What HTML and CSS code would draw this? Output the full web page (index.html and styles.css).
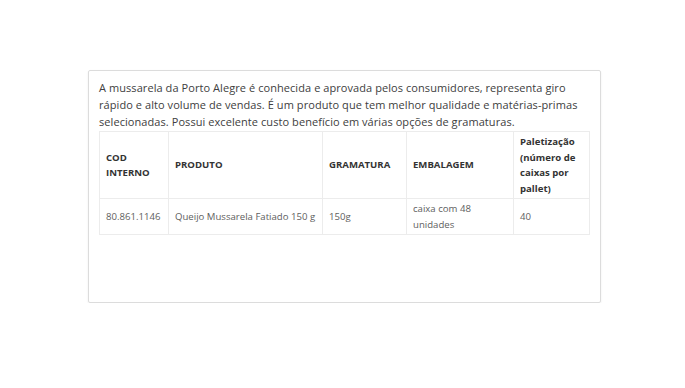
FILE: index.html
```html
<!DOCTYPE html>
<html lang="pt-BR">
<head>
<meta charset="utf-8">
<title>Mussarela Porto Alegre</title>
<link rel="stylesheet" href="styles.css">
</head>
<body>
<div class="page">
  <div class="card">
    <p class="intro">A mussarela da Porto Alegre é conhecida e aprovada pelos consumidores, representa giro rápido e alto volume de vendas. É um produto que tem melhor qualidade e matérias-primas selecionadas. Possui excelente custo benefício em várias opções de gramaturas.</p>
    <table class="spec">
      <colgroup>
        <col class="c1"><col class="c2"><col class="c3"><col class="c4"><col class="c5">
      </colgroup>
      <thead>
        <tr>
          <th class="upper">COD<br>INTERNO</th>
          <th class="upper">PRODUTO</th>
          <th class="upper">GRAMATURA</th>
          <th class="upper">EMBALAGEM</th>
          <th>Paletização (número de caixas por pallet)</th>
        </tr>
      </thead>
      <tbody>
        <tr>
          <td>80.861.1146</td>
          <td>Queijo Mussarela Fatiado 150 g</td>
          <td>150g</td>
          <td>caixa com 48 unidades</td>
          <td>40</td>
        </tr>
      </tbody>
    </table>
  </div>
</div>
</body>
</html>
```
FILE: styles.css
```css
html, body {
  margin: 0;
  padding: 0;
  background: #ffffff;
}
body {
  font-family: "Open Sans", "Liberation Sans", sans-serif;
  color: #333;
}
.page {
  padding: 70px 0 0 88px;
}
.card {
  width: 491px;
  height: 213px;
  padding: 8px 10px 10px 10px;
  border: 1px solid #dcdcdc;
  border-radius: 2px;
  box-shadow: 0 1px 2px rgba(0,0,0,0.08);
}
.intro {
  margin: 0 0 1px 0;
  font-size: 11px;
  line-height: 17px;
  letter-spacing: 0.07px;
  color: #404040;
}
.spec {
  width: 490px;
  border-collapse: collapse;
  table-layout: fixed;
  font-size: 9.6px;
  line-height: 15.5px;
}
.c1 { width: 69px; }
.c2 { width: 154px; }
.c3 { width: 84px; }
.c4 { width: 107px; }
.c5 { width: 76px; }
.spec th, .spec td {
  border: 1px solid #ececec;
  padding: 2px 6px;
  text-align: left;
  vertical-align: middle;
}
.spec th {
  font-weight: 700;
  color: #333;
}
.spec td {
  color: #606060;
}
```
